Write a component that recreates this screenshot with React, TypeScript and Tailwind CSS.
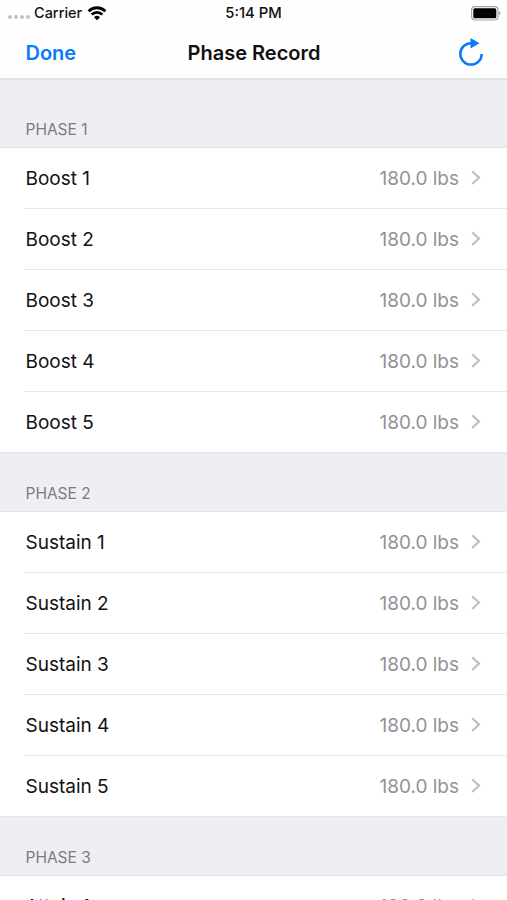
import React from 'react';

const phases = [
  { title: 'Phase 1', label: 'Boost', headerClass: 'h-[68px]' },
  { title: 'Phase 2', label: 'Sustain', headerClass: 'h-[59px]' },
  { title: 'Phase 3', label: 'Attain', headerClass: 'h-[59px]' },
];

const sets = [1, 2, 3, 4, 5];

const WifiIcon: React.FC = () => (
  <svg width="20" height="15" viewBox="0 0 20 15" fill="none" stroke="#000" strokeWidth="2.8">
    <path d="M1.6 5.2a12 12 0 0 1 16.8 0" />
    <path d="M4.7 8.6a7.6 7.6 0 0 1 10.6 0" />
    <path d="M10 14.2 7 11.2a4.3 4.3 0 0 1 6 0Z" fill="#000" stroke="none" />
  </svg>
);

const BatteryIcon: React.FC = () => (
  <svg width="30" height="15" viewBox="0 0 30 15">
    <rect x="0.6" y="0.6" width="26.4" height="13.4" rx="3.4" fill="#fff" stroke="#a3a3a3" strokeWidth="1.2" />
    <rect x="2.3" y="2.3" width="23" height="10" rx="1.6" fill="#000" />
    <path d="M28.2 5.3c1.6.7 1.6 3.3 0 4Z" fill="#8a8a8a" />
  </svg>
);

const RefreshIcon: React.FC = () => (
  <svg width="26" height="28" viewBox="0 0 26 28">
    <path d="M13.5 5.2A10.7 10.7 0 1 0 23.7 15.9" fill="none" stroke="#087bfa" strokeWidth="2.5" />
    <path d="M12.5 0 21.5 5.2 12.5 10.4Z" fill="#087bfa" />
  </svg>
);

const Chevron: React.FC = () => (
  <svg width="10" height="16" viewBox="0 0 10 16" fill="none" stroke="#c0c0c3" strokeWidth="2.2">
    <path d="M1.2 1.2 8 7.6l-6.8 6.4" />
  </svg>
);

const App: React.FC = () => {
  return (
    <div className="h-screen overflow-hidden bg-white font-['Inter',sans-serif] text-[#111]">
      <header className="h-20 border-b-2 border-[#e2e2e4] bg-[#fefefe]">
        <div className="grid h-[26px] grid-cols-3 items-center pl-2 pr-[6px]">
          <div className="flex items-center">
            <div className="mt-2 flex gap-[2px]">
              {[0, 1, 2, 3].map((dot) => (
                <span key={dot} className="size-[4px] rounded-full bg-[#c4c4c4]" />
              ))}
            </div>
            <span className="ml-1 mr-[5px] text-[14.5px] font-medium leading-none">Carrier</span>
            <WifiIcon />
          </div>
          <span className="-ml-[2px] text-center text-[14.8px] font-medium leading-none">5:14 PM</span>
          <div className="flex justify-end">
            <BatteryIcon />
          </div>
        </div>

        <div className="grid h-[52px] grid-cols-[1fr_auto_1fr] items-center pl-[25px] pr-[23px]">
          <button className="pl-[0.5px] pt-px text-left text-[20px] font-semibold leading-none text-[#087bfa]">Done</button>
          <h1 className="-ml-px pt-px text-[20px] font-semibold leading-none">Phase Record</h1>
          <button className="flex justify-end">
            <RefreshIcon />
          </button>
        </div>
      </header>

      <main>
        {phases.map((phase) => (
          <section key={phase.title}>
            <h2
              className={`flex items-end border-b border-[#e4e4e6] bg-[#efeef3] pb-[8px] pl-[25.5px] text-[15.5px] leading-[18px] text-[#7c7c80] uppercase ${phase.headerClass}`}
            >
              {phase.title}
            </h2>
            <ul>
              {sets.map((set) => (
                <li key={set} className="group pl-[25px] last:pl-0">
                  <div className="flex h-[61px] items-center border-b border-[#e6e6e7] pr-[26px] group-last:pl-[25px]">
                    <span className="flex-1 pl-[0.5px] pt-[3px] text-[19px]">{`${phase.label} ${set}`}</span>
                    <span className="mr-3 pt-[3px] text-[19px] text-[#929295]">180.0 lbs</span>
                    <Chevron />
                  </div>
                </li>
              ))}
            </ul>
          </section>
        ))}
      </main>
    </div>
  );
};

export default App;
